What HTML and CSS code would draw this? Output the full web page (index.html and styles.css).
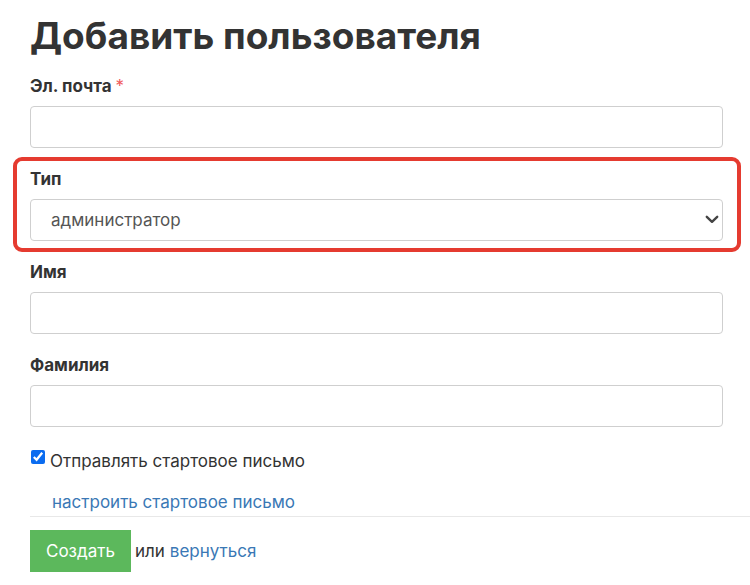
FILE: index.html
```html
<!DOCTYPE html>
<html lang="ru">
<head>
<meta charset="utf-8">
<title>Добавить пользователя</title>
<link rel="stylesheet" href="styles.css">
</head>
<body>
<div class="page">
  <h1 class="title">Добавить пользователя</h1>
  <form class="form">
    <div class="group">
      <label class="label">Эл. почта <span class="req">*</span></label>
      <input class="control" type="text">
    </div>
    <div class="group group--highlight">
      <label class="label">Тип</label>
      <div class="select-wrap">
        <div class="control select">администратор</div>
        <svg class="chevron" width="14" height="9" viewBox="0 0 14 9"><path d="M1.8 1.8 L7 6.8 L12.2 1.8" fill="none" stroke="#444" stroke-width="2.4" stroke-linecap="round" stroke-linejoin="round"/></svg>
      </div>
    </div>
    <div class="group">
      <label class="label">Имя</label>
      <input class="control" type="text">
    </div>
    <div class="group">
      <label class="label">Фамилия</label>
      <input class="control" type="text">
    </div>
    <div class="check-row">
      <input class="check" type="checkbox" checked>
      <span>Отправлять стартовое письмо</span>
    </div>
    <div class="setup-row">
      <a class="link" href="#">настроить стартовое письмо</a>
    </div>
    <div class="actions">
      <button class="btn" type="button">Создать</button>
      <span class="or">или</span>
      <a class="link" href="#">вернуться</a>
    </div>
  </form>
</div>
</body>
</html>
```
FILE: styles.css
```css
html, body {
  margin: 0;
  padding: 0;
  background: #fff;
}
body {
  font-family: Inter, "Noto Sans", "DejaVu Sans", sans-serif;
  font-size: 17px;
  line-height: 20px;
  color: #333;
  overflow: hidden;
}
.page {
  padding: 15px 0 0 30px;
}
.title {
  margin: 0 0 19px;
  font-size: 37px;
  line-height: 42px;
  font-weight: 700;
  color: #333;
}
.form {
  margin: 0;
}
.group {
  width: 693px;
  margin-bottom: 21px;
  position: relative;
}
.group--highlight::after {
  content: "";
  position: absolute;
  left: -17px;
  right: -18px;
  top: -12px;
  bottom: -11px;
  border: 4px solid #e53b30;
  border-radius: 9px;
  pointer-events: none;
}
.label {
  display: block;
  margin-bottom: 10px;
  font-weight: 700;
  font-size: 17px;
  line-height: 20px;
  color: #333;
}
.req {
  color: #f05a5a;
  font-weight: 400;
}
.control {
  display: block;
  box-sizing: border-box;
  width: 100%;
  height: 42px;
  margin: 0;
  padding: 0 20px;
  border: 1px solid #cfcfcf;
  border-radius: 4px;
  background: #fff;
  font: inherit;
  color: #555;
}
.select-wrap {
  position: relative;
}
.select {
  display: flex;
  align-items: center;
}
.chevron {
  position: absolute;
  right: 4px;
  top: 16px;
}
.check-row {
  display: flex;
  align-items: flex-start;
  padding-top: 3px;
  height: 20px;
}
.check {
  width: 14px;
  height: 14px;
  margin: -1px 5px 0 1px;
  accent-color: #0b6cf0;
}
.setup-row {
  padding: 21px 0 4px 22px;
}
.link {
  color: #3a78b5;
  text-decoration: none;
}
.actions {
  display: flex;
  align-items: center;
  border-top: 1px solid #e8e8e8;
  padding-top: 13px;
}
.btn {
  height: 42px;
  padding: 0 16px;
  border: none;
  border-radius: 0;
  background: #5cb85c;
  color: #fff;
  font: inherit;
  margin-right: 4px;
}
.or {
  margin-right: 5px;
  color: #333;
}
```
